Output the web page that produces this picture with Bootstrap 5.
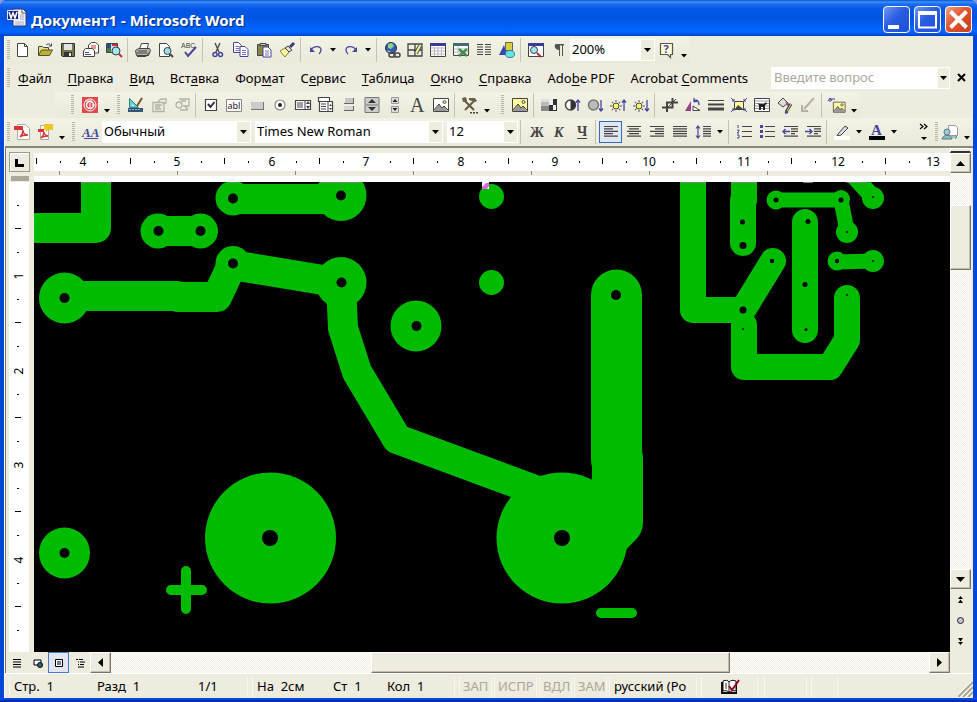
<!DOCTYPE html>
<html lang="ru">
<head>
<meta charset="utf-8">
<meta name="viewport" content="width=device-width, initial-scale=1">
<title>Документ1 - Microsoft Word</title>
<link href="https://cdn.jsdelivr.net/npm/bootstrap@5.3.0/dist/css/bootstrap.min.css" rel="stylesheet">
<style>
:root{--face:#eeebdf;--blue:#0046d8;--dim:#aca899;--track:repeating-conic-gradient(#fff 0 25%,#f2eee5 0 50%) 0 0/2px 2px}
body{background:#8a97e0;font:13px/18px "Noto Sans","DejaVu Sans",sans-serif;color:#000;overflow:hidden}
button,select,input{font:inherit;color:inherit;border-radius:0}
button{padding:0;border:0;background:none}
.app-window{background:var(--blue);border-radius:7px 7px 0 0}
.title-bar{height:36px;padding:0 5px 0 7px;border-radius:7px 7px 0 0;background:linear-gradient(#0c50d0 0,#3a93ff 2px,#1b6cf0 4px,#0558e6 9px,#0054e3 18px,#0162fb 28px,#0166ff 32px,#0040c8 36px)}
.title-bar h1{font:bold 15px/20px "Noto Sans",sans-serif;color:#fff;text-shadow:1px 1px 1px #0a2a80;margin:4px 0 0 4px}
.caption-btn{width:27px;height:27px;margin-top:3px;border:1px solid #fff;border-radius:4px;background:linear-gradient(135deg,#6d97f7,#2a5ce0 45%,#1d50d8)}
.caption-btn.close-btn{background:linear-gradient(135deg,#f0a58a,#e0522a 45%,#c8401c)}
.caption-btn svg{width:25px;height:25px;display:block}
.client{margin:0 4px;background:var(--face);border-left:1px solid #fff;min-height:0}
.bar{padding-left:2px}
.bar-std{height:27px}.bar-menu{height:29px}.bar-draw{height:26px}.bar-fmt{height:28px}
.band{background:linear-gradient(#f3f2e6,#e9eada)}
.grip{flex:none;width:3px;height:20px;background:repeating-linear-gradient(#b9b6a6 0 1px,transparent 1px 2px)}
.sep{flex:none;width:1px;height:24px;margin:0 3px 0 2px;background:#c5c2b1}
.tool{flex:none;width:23px;height:22px;display:grid;place-items:center}
.tool svg{width:16px;height:16px;overflow:visible}
.tool.on{border:1px solid #316ac5;background:#e1e6f0}
.drop{flex:none;width:12px;height:22px;display:grid;place-items:center}
.drop.low{align-items:end;padding-bottom:3px}
.drop svg,.combo-drop svg{width:7px;height:4px}
.combo{appearance:none;height:22px;border:1px solid #fff;padding:0 14px 2px 1px;outline:0;
 background:#fff url("data:image/svg+xml,%3Csvg xmlns='http://www.w3.org/2000/svg' width='13' height='20'%3E%3Cpath fill='%23efedde' d='M0 0h13v20H0z'/%3E%3Cpath d='M3 8h7l-3.500 4z'/%3E%3C/svg%3E") right center no-repeat}
.combo-zoom{width:85px}.combo-style{width:149px}.combo-font{width:188px}.combo-size{width:71px}
.menu-link{color:#000;text-decoration:none;padding:0 8px;white-space:nowrap}
.menu-link u{text-underline-offset:2px}
.ask{width:179px;height:22px;background:#fff;border:1px solid #fff}
.ask input{min-width:0;border:0;outline:0;padding:0 0 2px 2px;background:#fff}
.ask input::placeholder{color:#aca899;opacity:1}
.combo-drop{width:13px;background:#efedde;display:grid;place-items:center}
.work{display:grid;grid-template:34px minmax(0,1fr) 21px/28px minmax(0,1fr) 23px;border-top:2px solid #8b887b;border-left:1px solid #77756c;min-height:0}
.ruler-corner{width:21px;height:20px;margin:4px 0 0 3px;border:1px solid #9d9a8b;box-shadow:inset 1px 1px #fff;display:grid;place-items:center}
.ruler-corner svg{width:9px;height:9px}
.ruler-end{width:18px;height:5px;margin:4px 0 0 5px;background:#aca899}
.ruler-h{border-bottom:6px solid #fff;min-width:0}
.ruler-h svg{width:100%;height:28px;display:block}
.ruler-v{width:20px;margin-left:3px;background:#fff;min-height:0}
.ruler-v svg{width:20px;height:100%;display:block}
.ruler-label{font:12px "Noto Sans",sans-serif;text-anchor:middle}
.page-view{background:#000;min-width:0;min-height:0;overflow:hidden}
.page-view svg{display:block;width:100%;height:100%}
.scroll-v{grid-column:3;grid-row:1/4;min-height:0;padding-right:2px}
.scroll-v .split{height:5px;border:1px solid #fff;border-bottom:2px solid #333}
.bevel{flex:none;background:var(--face);border:1px solid;border-color:#fff #77756c #77756c #fff;box-shadow:inset -1px -1px #c2bfb0;display:grid;place-items:center;min-width:0;min-height:0}
.bevel svg{width:9px;height:9px}
.square{width:21px;height:20px}
.track{background:var(--track);min-width:0;min-height:0}
.browse{padding-bottom:21px}
.browse button{height:21px;display:grid;place-items:center}
.browse svg{width:9px;height:9px}
.scroll-h{grid-column:1/3;grid-row:3}
.view-btn{flex:none;width:21px;height:21px;display:grid;place-items:center}
.view-btn.on{border:1px solid #4a78c8;background:#e1e6f0}
.view-btn svg{width:10px;height:10px}
.status{height:25px;border-top:1px solid #fff;padding:2px 0 1px 4px;overflow:hidden}
.pane{flex:none;height:20px;border-right:1px solid #f8f6ee;border-left:1px solid #f8f6ee;white-space:pre;padding-left:4px;margin-right:4px}
.pane.off{color:var(--dim);margin-right:2px;padding-left:3px}
.pane span{display:inline-block}
.p-page{width:239px}.p-pos{width:203px}.p-flag{width:33px}.p-wide{width:43px}.p-lang{width:88px}.pane.p-spell{width:57px;padding:0;margin-right:6px}.p-a{width:43px}.p-b{width:27px}
.s-page{width:83px}.s-sec{width:101px}.s-at{width:76px}.s-line{width:54px}
.window-foot{height:4px;background:linear-gradient(#0a55e8,#001ea8)}
</style>
<script src="https://cdn.jsdelivr.net/npm/bootstrap@5.3.0/dist/js/bootstrap.bundle.min.js"></script>
</head>
<body>
<div class="app-window vh-100 d-flex flex-column">
<header class="title-bar d-flex align-items-center">
 <svg width="20" height="20" viewBox="0 0 20 20" aria-hidden="true"><path d="M6 1h10l3 3v14H6z" fill="#f3f3fb" stroke="#333a60"/><path d="M15 1v4h4" fill="#fff" stroke="#555"/><path d="M8 14h9M8 16h9M13 7h4M13 9h4M13 11h4" stroke="#a5a9c0"/><path d="M.5 2.500h11v9H.5z" fill="#15277c" stroke="#dfe4fb"/><path d="M2 4l2 6 2-5 2 5 2-6" fill="none" stroke="#fff" stroke-width="1.500"/></svg>
 <h1>Документ1 - Microsoft Word</h1>
 <div class="d-flex ms-auto gap-1">
 <button class="caption-btn" aria-label="Свернуть"><svg viewBox="0 0 25 25"><path d="M4 18h11v4H4z" fill="#fff"/></svg></button>
 <button class="caption-btn" aria-label="Развернуть"><svg viewBox="0 0 25 25"><path d="M4 5.500h17v15H4z" fill="none" stroke="#fff" stroke-width="2"/><path d="M3 4h19v4H3z" fill="#fff"/></svg></button>
 <button class="caption-btn close-btn" aria-label="Закрыть"><svg viewBox="0 0 25 25"><path d="M4.500 4.500l16 16M20.500 4.500l-16 16" stroke="#fff" stroke-width="4"/></svg></button>
 </div>
</header>

<main class="client flex-fill d-flex flex-column">
 <div class="bar bar-std d-flex align-items-center" role="toolbar" aria-label="Стандартная">
  <div class="band d-flex align-items-center h-100">
  <i class="grip"></i><span class="d-flex align-items-center" data-tools="new open save mail search | print preview spell | cut copy paste brush | undo v redo v | link tables grid excel columns drawing | map para"></span>
  <select class="combo combo-zoom" aria-label="Масштаб"><option>200%</option></select>
  <span class="d-flex" data-tools="help low"></span></div>
 </div>
 <nav class="bar bar-menu d-flex align-items-center" aria-label="Меню">
  <i class="grip"></i>
  <a class="menu-link" href="#"><u>Ф</u>айл</a><a class="menu-link" href="#"><u>П</u>равка</a><a class="menu-link" href="#"><u>В</u>ид</a><a class="menu-link" href="#">Вст<u>а</u>вка</a><a class="menu-link" href="#">Фор<u>м</u>ат</a><a class="menu-link" href="#">С<u>е</u>рвис</a><a class="menu-link" href="#"><u>Т</u>аблица</a><a class="menu-link" href="#"><u>О</u>кно</a><a class="menu-link" href="#"><u>С</u>правка</a><a class="menu-link" href="#">Ado<u>b</u>e PDF</a><a class="menu-link" href="#">Acrobat <u>C</u>omments</a>
  <div class="ask d-flex ms-auto"><input class="flex-fill" type="text" placeholder="Введите вопрос" aria-label="Введите вопрос"><button class="combo-drop" aria-label="Список вопросов"><svg viewBox="0 0 7 4"><path d="M0 0h7L3.500 4z"/></svg></button></div>
  <button class="tool" aria-label="Закрыть документ"><svg viewBox="0 0 16 16"><path d="M4 4l7 7M11 4l-7 7" stroke="#000" stroke-width="2"/></svg></button>
 </nav>
 <div class="bar bar-draw d-flex align-items-center" role="toolbar" aria-label="Рисование">
  <div class="band d-flex align-items-center ms-5 ps-3 h-100"><i class="grip me-1"></i><span class="d-flex" data-tools="stamp low"></span>
  <i class="grip me-1 ms-1"></i><span class="d-flex align-items-center" data-tools="design props code | check abl button radio list combo toggle spin scroll label image | tools low"></span>
  <i class="grip ms-2 me-1"></i><span class="d-flex align-items-center" data-tools="pic | tone contup contdn briup bridn | crop rotate lines compress wrap fill alpha | reset low"></span></div>
 </div>
 <div class="bar bar-fmt band d-flex align-items-center" role="toolbar" aria-label="Форматирование">
  <i class="grip"></i><span class="d-flex" data-tools="pdf pdfmail low"></span>
  <i class="grip mx-1"></i><span class="d-flex" data-tools="styles"></span>
  <select class="combo combo-style" aria-label="Стиль"><option>Обычный</option></select>
  <select class="combo combo-font ms-1" aria-label="Шрифт"><option>Times New Roman</option></select>
  <select class="combo combo-size ms-1" aria-label="Размер"><option>12</option></select>
  <span class="d-flex align-items-center" data-tools="| bold italic under | *left center right full spacing v | nums bullets outdent indent | hilite v color v"></span>
  <span class="d-flex ms-auto" data-tools="more"></span><i class="grip"></i><span class="d-flex" data-tools="people low"></span>
 </div>

 <section class="work flex-fill">
  <div><button class="ruler-corner" aria-label="Табуляция"><svg viewBox="0 0 9 9"><path d="M1.500 1v6.500H9" fill="none" stroke="#000" stroke-width="3"/></svg></button><div class="ruler-end"></div></div>
  <div class="ruler-h"><svg id="rulerH" viewBox="34 148 916 28" preserveAspectRatio="xMinYMin slice"></svg></div>
  <div class="ruler-v"><svg id="rulerV" viewBox="10 182 20 470" preserveAspectRatio="xMinYMin slice"></svg></div>
  <div class="page-view">
   <svg viewBox="34 182 916 470" preserveAspectRatio="xMinYMin slice" role="img" aria-label="Печатная плата">
    <g fill="none" stroke="#0b0" stroke-linejoin="round" stroke-linecap="round">
     <g stroke-width="30">
      <path d="M96 170V228H20M64 296H177M177 297H217L232 265L341 283L343 328L357 372L397 439L562 500M233 199H341"/>
      <path d="M158 231H200" stroke-linecap="butt"/>
     </g>
     <path stroke-width="51" d="M616.500 295V460"/><path stroke-width="51" d="M617.500 458V522L590 550"/>
     <g stroke-width="26">
      <path d="M693 170V310H743L773 261M744 170V200M743 200V243M805 222V330M744 325V367H830L847 340V298"/>
     </g>
     <g stroke-width="15"><path d="M776 200H841M837 262L873 261"/><path d="M841 200L847 231"/><path d="M850 172L873 197" stroke-width="17"/></g>
     <path stroke-width="10" d="M186 571V609M171 590H202M601 613H632"/>
    </g>
    <g fill="#0b0">
     <circle cx="233" cy="198" r="17.500"/><circle cx="341" cy="195.500" r="25.500"/><circle cx="158" cy="231" r="17.500"/><circle cx="200.500" cy="231" r="17.500"/><circle cx="233" cy="263.500" r="17.500"/><circle cx="341" cy="282.500" r="25.500"/><circle cx="64.500" cy="298" r="25.500"/><circle cx="64.500" cy="553" r="25.500"/><circle cx="416" cy="326" r="25.500"/><circle cx="491.500" cy="196.500" r="12.500"/><circle cx="491.500" cy="282.500" r="12.500"/><circle cx="270.500" cy="538" r="65.500"/><circle cx="562" cy="538" r="65.500"/>
     <circle cx="776" cy="200" r="9.500"/><circle cx="841" cy="199" r="9"/><circle cx="847" cy="232" r="11"/><circle cx="873" cy="198" r="11"/><circle cx="873" cy="261" r="11"/><circle cx="837" cy="261" r="9.500"/><circle cx="808" cy="222" r="9.500"/>
     <path d="M804 182h8v1h-8z"/>
    </g>
    <g fill="#000">
     <circle cx="233" cy="198.500" r="5"/><circle cx="341" cy="195.500" r="5"/><circle cx="158.500" cy="231" r="5"/><circle cx="200.500" cy="231" r="5"/><circle cx="233" cy="263.500" r="5"/><circle cx="341.500" cy="282.500" r="5"/><circle cx="64.500" cy="298" r="5"/><circle cx="64.500" cy="553" r="5"/><circle cx="416.500" cy="326" r="5"/><circle cx="616" cy="295" r="5"/><circle cx="270" cy="538" r="8"/><circle cx="562" cy="538" r="8"/>
     <circle cx="742.500" cy="222" r="2.500"/><circle cx="743" cy="245.500" r="3.500"/><circle cx="772" cy="261" r="2.200"/><circle cx="743" cy="310" r="3.500"/><circle cx="743" cy="329" r="1"/><circle cx="776" cy="200" r="2.500"/><circle cx="841" cy="200" r="2.500"/><circle cx="847" cy="232" r="1"/><circle cx="873" cy="197" r="1"/><circle cx="873" cy="261" r="1"/><circle cx="837" cy="261" r="2.200"/><circle cx="808" cy="221.500" r="2.500"/><circle cx="805" cy="284.500" r="2.500"/><circle cx="806" cy="329.500" r="1.500"/><circle cx="847" cy="295" r="1"/>
    </g>
    <path d="M81 182h30M230 182h6M320 182h41M680 182h26M731 182h26M803 182h10M846 182h20" stroke="#d46bd8"/><path d="M482 182h7v7h-7z" fill="#fff"/><path d="M489 183h-3l-4 4v2h5l2-3z" fill="#d868dc"/>
   </svg>
  </div>
  <div class="scroll-v d-flex flex-column">
   <div class="split"></div>
   <button class="bevel square" aria-label="Вверх"><svg viewBox="0 0 9 9"><path d="M0 7h9L4.500 2z"/></svg></button>
   <div class="track flex-fill d-flex flex-column"><span style="flex:32"></span><div class="bevel" style="flex:63"></div><span style="flex:300"></span></div>
   <button class="bevel square" aria-label="Вниз"><svg viewBox="0 0 9 9"><path d="M0 2h9L4.500 7z"/></svg></button>
   <div class="browse d-grid">
    <button aria-label="Предыдущая страница"><svg viewBox="0 0 9 9"><path d="M4.500 1L7 4H2zM4.500 4.500L7 8H2z"/></svg></button>
    <button aria-label="Выбор объекта перехода"><svg viewBox="0 0 9 9"><circle cx="4.500" cy="4.500" r="3" fill="#c5c2d0" stroke="#222"/></svg></button>
    <button aria-label="Следующая страница"><svg viewBox="0 0 9 9"><path d="M4.500 8L7 5H2zM4.500 4.500L7 1H2z"/></svg></button>
   </div>
  </div>
  <div class="scroll-h d-flex">
   <button class="view-btn" aria-label="Обычный режим"><svg viewBox="0 0 10 10"><path d="M1 1.500h8M1 4h8M1 6.500h8M1 9h8" stroke="#000"/></svg></button>
   <button class="view-btn" aria-label="Веб-документ"><svg viewBox="0 0 10 10"><path d="M1 2h7v5H1z" fill="#fff" stroke="#000"/><circle cx="7" cy="7" r="2.500" fill="#396480" stroke="#000"/></svg></button>
   <button class="view-btn on" aria-label="Разметка страницы"><svg viewBox="0 0 10 10"><path d="M1.500 1.500h7v7h-7z" fill="#fff" stroke="#000"/><path d="M3 4h4M3 6h4" stroke="#000"/></svg></button>
   <button class="view-btn" aria-label="Структура"><svg viewBox="0 0 10 10"><path d="M1 1.500h2M4 1.500h4M3 4h1M5 4h5M3 6.500h1M5 6.500h4M3 9h6" stroke="#000"/></svg></button>
   <button class="bevel square h-100" aria-label="Влево"><svg viewBox="0 0 9 9"><path d="M7 0v9L2 4.500z"/></svg></button>
   <div class="track flex-fill d-flex"><span style="flex:261"></span><div class="bevel" style="flex:358"></div><span style="flex:199"></span></div>
   <button class="bevel square h-100" aria-label="Вправо"><svg viewBox="0 0 9 9"><path d="M2 0v9l5-4.500z"/></svg></button>
  </div>
 </section>

 <footer class="status d-flex align-items-center">
  <div class="pane p-page"><span class="s-page">Стр.  1</span><span class="s-sec">Разд  1</span><span>1/1</span></div>
  <div class="pane p-pos"><span class="s-at">На  2см</span><span class="s-line">Ст  1</span><span>Кол  1</span></div>
  <div class="pane p-flag off">ЗАП</div><div class="pane p-wide off">ИСПР</div><div class="pane p-flag off">ВДЛ</div><div class="pane p-flag off">ЗАМ</div>
  <div class="pane p-lang">русский (Ро</div>
  <div class="pane p-spell text-center"><svg width="20" height="17" viewBox="0 0 20 17" role="img" aria-label="Правописание"><path d="M1 3h2v10h13V3h1v12H1z" fill="#111"/><path d="M3 2c3-1 5-1 6 1 2-2 4-2 7-1v10c-3-1-5 0-7 1-1-1-4-2-6-1z" fill="#fff" stroke="#111"/><path d="M9 3v10M5 5h2M5 7h2M5 9h2" stroke="#333"/><path d="M9 7l3 4 7-10" fill="none" stroke="#8b0c20" stroke-width="2"/></svg></div>
  <div class="pane p-a"></div><div class="pane p-b"></div>
  <svg class="ms-auto align-self-end" width="15" height="15" viewBox="0 0 15 15" aria-hidden="true"><path d="M0 15L15 0M5 15L15 5M10 15l5-5" stroke="#aaa797" stroke-width="2"/><path d="M-2 15L15-2M3 15L15 3M8 15l7-7" stroke="#fff"/></svg>
 </footer>
</main>
<div class="window-foot"></div>
</div>

<script>
// Icon set: name -> [label, svg content on a 16x16 grid]
const K='#444', N='#45459c';
const st=(d,c=K,w=1,f='none')=>`<path d="${d}" stroke="${c}" stroke-width="${w}" fill="${f}"/>`;
const fl=(d,c=K)=>`<path d="${d}" fill="${c}"/>`;
const page=(x,y)=>st(`M${x} ${y}h5l3 3v7h-8z`,N,1,'#fff')+st(`M${x+2} ${y+4}h4M${x+2} ${y+6}h4M${x+2} ${y+8}h4`,'#7777b8');
const bars=(a,x=1)=>st(a.map((p,i)=>`M${x+p[0]} ${2.5+i*2.4}h${p[1]}`).join(''),K,1.2);
const photo=(f)=>st('M.5 1.500h15v13H.5z',K,1,f)+fl('M1 14l5-7 3 4 2-2 4 5z','#999')+st('M1 13l5-6 3 4 2-2 4 4','#444')+`<circle cx="11.500" cy="5" r="1.500" fill="#ffe46b" stroke="#555"/>`;
const sun=(x)=>[0,45,90,135].map(a=>`<path d="M${x-6} 9h12" stroke="#555" stroke-dasharray="2 8" transform="rotate(${a} ${x} 9)"/>`).join('')+`<circle cx="${x}" cy="9" r="3" fill="#fff36b" stroke="#444"/>`;
const up=st('M14 14V3M12 5.500L14 3l2 2.500',N,1.3), dn=st('M14 3v11M12 11.500l2 2.500 2-2.500',N,1.3);
const I={
new:['Создать',st('M3.500 1.500h7l3 3v10h-10z',K,1,'#fff')+st('M10.500 1.500v3h3')],
open:['Открыть',st('M1.500 13V4.500h4l1 1h5V8',K,1,'#e8e27e')+st('M1.500 13.500l3-5.500h11l-3 5.500z','#55551c',1,'#b9b13a')+st('M9 3c2-2 4-1 5 1M12 4h2.500V1.500')],
save:['Сохранить',st('M1.500 1.500h13v13h-12l-1-1z','#333',1,'#77764a')+fl('M4 2h8v6H4z','#e4e4e4')+fl('M4 10h8v4H4z','#333')+fl('M9 11h2v3H9z','#eee')],
mail:['Письмо',st('M5.500 7V3l3-2.500h4l3 2.500V11H12z',K,1,'#fff')+st('M8 4h5M8 6h5','#c33')+st('M2.500 6.500h7l2 2.500v5.500H.500V9z',K,1,'#fff')+st('M2 10.500h4M2 12.500h6',N)],
search:['Найти',st('M.500 1.500h11v9h-11z',K,1,'#cde')+fl('M1 2h4v4H1z','#28507a')+fl('M6 2h5v2H6z','#c33')+fl('M1 6h4v4H1z','#487d40')+st('M13 12l3 3','#c03030',2)+'<circle cx="10" cy="9" r="4" fill="#a9e3e8" stroke="#345"/>'],
print:['Печать',st('M4.500 7l2-5.500h7L12 7',K,1,'#fff')+st('M.500 8.500l3-2h11l1 2-2 5h-12z',K,1,'#b8b6ac')+st('M3 9h9M2 11h10',K)+st('M2 14.500h9l3-4')],
preview:['Просмотр',st('M1.500 1.500h7l3 3v10h-10z',K,1,'#fff')+st('M12 12l3 3','#444',2)+'<circle cx="9.500" cy="9" r="3.500" fill="#a6dade" stroke="#345"/>'],
spell:['Правописание','<text x="0" y="6" font-size="7" fill="#444" font-family="Liberation Sans">ABC</text>'+st('M4 10l3 4 8-9',N,2)],
cut:['Вырезать',st('M5 1l4 9M10 1L6 10',K,1.3)+'<circle cx="5" cy="12.500" r="2" fill="none" stroke="#45459c" stroke-width="1.500"/><circle cx="10.500" cy="12.500" r="2" fill="none" stroke="#45459c" stroke-width="1.500"/>'],
copy:['Копировать',page(.5,.5)+page(7,4.5)],
paste:['Вставить',st('M1.500 2.500h11v11h-11z',K,1,'#8a8449')+fl('M4 1h6v3H4z','#ccc')+st('M4 1.500h6v2H4z')+page(7,5)],
brush:['Формат по образцу',st('M1 9l5-3 4 4-4 5z','#88803a',1,'#fff59b')+st('M6 6l3-2 4 4-3 2z',K,1,'#ddd')+st('M11 5l4-4','#3a3a80',3)],
undo:['Отменить',st('M3 8c3-5 10-4 10 0 0 2-1 3-2 4',N,1.3)+fl('M2 5v5h5z',N)],
redo:['Вернуть',st('M13 8C10 3 3 4 3 8c0 2 1 3 2 4',N,1.3)+fl('M14 5v5H9z',N)],
link:['Гиперссылка','<circle cx="7" cy="6" r="5.500" fill="#3458b8" stroke="#234"/>'+fl('M4 2l4-1 2 3-3 3-3-1zM3 8l3 1 1 2-3-1z','#8fd18c')+'<rect x="5" y="11" width="6" height="4" rx="2" fill="none" stroke="#444" stroke-width="1.500"/><rect x="10" y="11" width="6" height="4" rx="2" fill="none" stroke="#444" stroke-width="1.500"/>'],
tables:['Таблицы и границы',st('M1 2h14v12H1zM1 8h14M8 2v12',K,1.3)+st('M9 11l4-7',K,4)+st('M9 11l4-7','#fff59b',2)],
grid:['Добавить таблицу',st('M.500 2.500h15v12H.500z',K,1,'#fff')+st('M1 6h14M1 9h14M1 12h14M4.500 5v9M8 5v9M11.500 5v9','#bbb')+fl('M0 1h16v3H0z','#3a3a98')],
excel:['Лист Excel',st('M.500 2.500h15v11H.500z',K,1,'#fff')+st('M1 7h14M1 10h14M5 4v9','#bbb')+fl('M0 1h16v3H0z','#3f6d73')+st('M6 7l8 7M14 7l-8 7','#408a4c',2.4)],
columns:['Колонки',st('M1 2.500h6M1 5h6M1 7.500h6M1 10h6M1 12.500h6M9 2.500h6M9 5h6M9 7.500h6M9 10h6M9 12.500h6')],
drawing:['Рисование',fl('M6 0h8v9H6z','#d8cf43')+st('M6.500 .500h7v8h-7z','#665')+fl('M0 13L5 3l3 10z','#3446b0')+'<ellipse cx="11" cy="12" rx="4.500" ry="3.500" fill="#68e2ee" stroke="#388"/>'],
map:['Схема документа',st('M.500 1.500h15v13H.500z',K,1,'#fff')+fl('M0 1h16v3H0z','#3a3a98')+'<circle cx="6" cy="8" r="3.500" fill="#a9e3e8" stroke="#345"/>'+st('M9 11l4 4','#a33',2)],
para:['Непечатаемые знаки',fl('M5 2h8v1.500h-1V14h-1V3.500H9V14H8V8C3 8 3 2 5 2z','#555')],
help:['Справка',st('M1.500 1.500h12v11h-2v3l-3-3h-7z','#555',1.2,'#fffbd6')+'<text x="4.500" y="11" font-size="11" font-weight="700" fill="#45459c">?</text>'],
stamp:['Штамп','<rect width="16" height="16" fill="#e04a4f"/>'+'<circle cx="8" cy="8" r="6" fill="none" stroke="#fff"/><circle cx="8" cy="8" r="3.500" fill="none" stroke="#fff" stroke-width="1.500"/>'+st('M3 4h7M8 6v5M10 8h3','#fff')],
design:['Конструктор',st('M1.500 1.500v9h9z','#2a8383',1,'#67cfcf')+fl('M4 7v2h2z','#fff')+st('M9 9l5-8','#7c522d',2)+fl('M0 11h15v4H0z','#35547a')+st('M2 12v1M5 12v1M8 12v1M11 12v1','#fff')],
props:['Свойства',st('M2 5.500h11v9H2zM4 8h7M4 10h5M4 12h6M7 5l3-3h5v4l-3 1','#b5b2a4',1.3)],
code:['Исходный текст',st('M5 2h10v7H9M11 9l3 4M6 13h7M7 4h5','#b5b2a4',1.3)+'<circle cx="5" cy="8" r="3" fill="none" stroke="#b5b2a4" stroke-width="1.300"/>'],
check:['Флажок',st('M2.500 2.500h11v11h-11z',K,1.2,'#fff')+st('M5 7l2.500 3 4-5','#333',2)],
abl:['Поле',st('M.500 2.500h15v12H.500z','#888',1,'#fff')+'<text x="1.500" y="12" font-size="9" fill="#222">abl</text>'],
button:['Кнопка',fl('M2 5h13v8H2z','#777')+fl('M2 5h12v7H2z','#ccc')],
radio:['Переключатель','<circle cx="8" cy="8" r="5" fill="#fff" stroke="#888" stroke-width="1.200"/><circle cx="8" cy="8" r="2" fill="#222"/>'],
list:['Список',st('M.500 3.500h15v9H.500z',K,1.2,'#fff')+st('M2 6h6M2 8h6M2 10h6M10 3.500v9')+fl('M11 7h4l-2-3zM11 9h4l-2 3z')],
combo:['Поле со списком',st('M.500 .500h11v4H.500zM1.500 4.500h13v10h-13z',K,1.2,'#fff')+st('M3 7h5M3 9.500h5M3 12h5M10 5v9')+fl('M11 9h3l-1.500-2zM11 11h3l-1.500 2z')],
toggle:['Выключатель',fl('M4 1h9v6H3V6h9V1z','#666')+fl('M4 1h8v5H4z','#c5c5c5')+fl('M3 9h10v5H3z','#666')+fl('M3 9h9v4H3z','#d5d5d5')],
spin:['Счетчик',st('M1 .500h14v15H1z','#777',1,'#ccc')+fl('M4 6h8L8 2zM4 10h8l-4 4z','#333')+st('M2 8h12','#777')],
scroll:['Прокрутка',st('M4.500 .5h7v6h-7zM4.500 9.500h7v6h-7z','#999',1,'#ddd')+fl('M5.500 5h5L8 2zM5.500 11h5L8 14z','#222')],
label:['Надпись','<text x="0" y="15" font-size="20" fill="#444" font-family="Liberation Serif">A</text>'],
image:['Рисунок',photo('#fff')],
tools:['Другие элементы',st('M2 3l10 10','#555',2)+st('M12 4L3 13','#6d5a3a',2)+fl('M7 1h6l2 3-2 1-6-2zM0 1l4-1 1 4-4 1z','#685f45')+fl('M8 15h2v1.500H8zM11 15h2v1.500h-2zM14 15h2v1.500h-2z')],
pic:['Добавить рисунок',photo('#fff9a0')],
tone:['Изображение',fl('M0 2h8v3H0z','#ddd')+fl('M0 5h8v4H0z','#bbb')+fl('M0 9h8v5H0z','#888')+fl('M8 2h8v12H8z','#333')+fl('M8 2h4v6H8zM12 8h3v5h-3z','#eee')],
contup:['Больше контраст','<circle cx="6.500" cy="8" r="5" fill="#fff" stroke="#444" stroke-width="1.500"/>'+fl('M6.500 3a5 5 0 0 1 0 10z','#333')+up],
contdn:['Меньше контраст','<circle cx="6.500" cy="8" r="5" fill="#bbb" stroke="#777" stroke-width="1.500"/>'+dn],
briup:['Ярче',sun(6)+up],bridn:['Темнее',sun(6)+dn],
crop:['Обрезка',st('M5 15V5.500H16M0 10.500h10.500V1',K,2)+st('M6 10L14 2',K,1)],
rotate:['Повернуть',fl('M0 14L6 4v10z','#97418b')+st('M8 13.500h7L8 9z',K,1,'#fff')+st('M9 4c3-2 5 0 5 4M9 1v3.500h3',N,1.3)],
lines:['Тип линии',st('M0 3.500h16',K,1)+st('M0 7.500h16',K,2)+st('M0 12h16',K,3)],
compress:['Сжатие',st('M3.500 4.500h9v8h-9z',K,1,'#fff9a0')+fl('M4 12l3-4 5 4z')+st('M0 1l3 3M16 1l-3 3M0 15l3-3M16 15l-3-3M1 4h2V2M15 4h-2V2M1 12h2v2M15 12h-2v2',N)],
wrap:['Обтекание',st('M.500 1.500h15v13H.500z',K,1,'#fff')+st('M1 4h14M1 6.500h14M1 9h14M1 11.500h14','#999')+fl('M4 6l2 1h4l2-2 1 2-2 1v5H9v-3H7v3H5V9z','#222')],
fill:['Формат рисунка',st('M1 6l5-5 5 5-5 4z',K,1,'#ddd')+fl('M8 5l5 2-1 4z','#97418b')+st('M9 15l5-8','#444',3)+st('M10 14l4-7','#e2dc66',1)+st('M8 16l3-1',N,2)],
alpha:['Прозрачный цвет',st('M14 1L4 12M2 8v6h6','#b5b2a4',2)],
reset:['Сброс',`<g transform="translate(4 4) scale(.78)">${photo('#fff9a0')}</g>`+st('M1 5V2h5M-1 4l2-3 2 3',N)],
pdf:['PDF',st('M3.500 .500h8l4 4v11h-12z','#aaa',1,'#fff')+fl('M0 2h9v4H0z','#d33')+st('M6 13c3-3 3-5 3-7 0 3 2 5 5 5-3 0-6 0-8 2','#d33',1.4)],
pdfmail:['PDF по почте',st('M3.500 1.500h8v14h-8z','#aaa',1,'#fff')+fl('M1 5h6v3H1z','#d33')+st('M4 14c3-3 3-4 3-6 0 2 2 4 4 4-3 0-5 0-7 2','#d33',1.4)+fl('M7 0h9v6h-5l-2 2V6H7z','#f0c526')],
styles:['Стили','<text x="-1" y="13" font-size="13" font-style="italic" font-weight="700" fill="#45459c" font-family="Liberation Serif">AA</text>'+st('M1 14.500h14',N)],
bold:['Полужирный','<text x="2" y="13" font-size="14" font-weight="700" fill="#444" font-family="Liberation Serif">Ж</text>'],
italic:['Курсив','<text x="3" y="13" font-size="14" font-weight="700" font-style="italic" fill="#444" font-family="Liberation Serif">К</text>'],
under:['Подчеркнутый','<text x="3" y="12" font-size="14" font-weight="700" fill="#444" font-family="Liberation Serif">Ч</text>'+st('M3 14.500h10')],
left:['По левому краю',bars([[0,14],[0,9],[0,14],[0,9],[0,14]])],
center:['По центру',bars([[0,14],[2,10],[0,14],[2,10],[0,14]])],
right:['По правому краю',bars([[0,14],[5,9],[0,14],[5,9],[0,14]])],
full:['По ширине',bars([[0,14],[0,14],[0,14],[0,14],[0,14]])],
spacing:['Интервал',st('M3 2v12M1 4.500L3 2l2 2.500M1 11.500L3 14l2-2.500',N,1.2)+bars([[0,8],[0,8],[0,8],[0,8],[0,8]],8)],
nums:['Нумерация',st('M2 1v3M1 6h2v1L1 9h2M1 11h2v3H1',N)+st('M6 2.500h10M6 7.500h10M6 12.500h10')],
bullets:['Маркеры',fl('M1 1h3v3H1zM1 6h3v3H1zM1 11h3v3H1z',N)+st('M6 2.500h10M6 7.500h10M6 12.500h10')],
outdent:['Уменьшить отступ',bars([[1,14],[8,7],[8,7],[8,4],[1,14]],1)+st('M8 7.500H1M3.500 5L1 7.500 3.500 10',N,1.4)],
indent:['Увеличить отступ',bars([[1,14],[8,7],[8,7],[8,4],[1,14]],1)+st('M0 7.500h7M4.500 5L7 7.500 4.500 10',N,1.4)],
hilite:['Выделение',st('M4 10l7-8 3 2-7 7-4 1z',K,1,'#d6dcee')+fl('M0 12h16v4H0z','#fff')],
color:['Цвет шрифта','<text x="2" y="11" font-size="15" font-weight="700" fill="#45459c" font-family="Liberation Serif">A</text>'+fl('M0 12h16v4H0z','#000')],
more:['Другие кнопки',st('M4 0l3 2.500L4 5M8 0l3 2.500L8 5','#000',1.2)+fl('M5 13h6l-3 3z','#000')],
people:['Совместная работа',st('M6.500 1.500h7l2 2v8h-9z','#99a',1,'#fff')+'<circle cx="5" cy="8" r="3" fill="#9fcfc8" stroke="#578"/>'+st('M0 15c1-5 9-5 10 0z','#578',1,'#8cc3bd')+st('M9 13h6l-2-2M15 13l-2 2','#4a9a9a')]
};
const arrow='<svg viewBox="0 0 7 4"><path d="M0 0h6L3 3.500z"/></svg>';
document.querySelectorAll('[data-tools]').forEach(g=>{
 g.innerHTML=g.dataset.tools.split(' ').map(t=>{
  if(t==='|')return '<i class="sep"></i>';
  if(t==='v')return `<button class="drop" aria-label="Список">${arrow}</button>`;
  if(t==='low')return `<button class="drop low" aria-label="Параметры">${arrow}</button>`;
  const on=t[0]==='*', [l,s]=I[on?t.slice(1):t];
  return `<button class="tool${on?' on':''}" aria-label="${l}"><svg viewBox="0 0 16 16">${s}</svg></button>`;
 }).join('');
});

// Rulers: one unit every 94.4px, a tick at the half and dots at the quarters
const unit=94.4;
let h='<path d="M34 153h916v18H34z" fill="#fff"/>', v='';
for(let i=3;i<14;i++){
 const x=Math.round(83+(i-4)*unit);
 if(i>3)h+=`<text class="ruler-label" x="${x}" y="166">${i}</text>`;
 h+=`<path d="M${x+24} 161h1v2h-1zM${x+47} 158h1v6h-1zM${x+71} 161h1v2h-1z"/>`;
}
for(let x=59;x<950;x+=118)h+=`<path d="M${x} 171h1v4h-1z" fill="#8a8778"/>`;
for(let i=0;i<5;i++){
 const y=Math.round(182+i*unit);
 if(i)v+=`<text class="ruler-label" transform="translate(24 ${y}) rotate(-90)">${i}</text>`;
 v+=`<path d="M18 ${y+23}h2v1h-2zM16 ${y+46}h6v1h-6zM18 ${y+70}h2v1h-2z"/>`;
}
document.getElementById('rulerH').innerHTML=h;
document.getElementById('rulerV').innerHTML=v;
</script>
</body>
</html>
